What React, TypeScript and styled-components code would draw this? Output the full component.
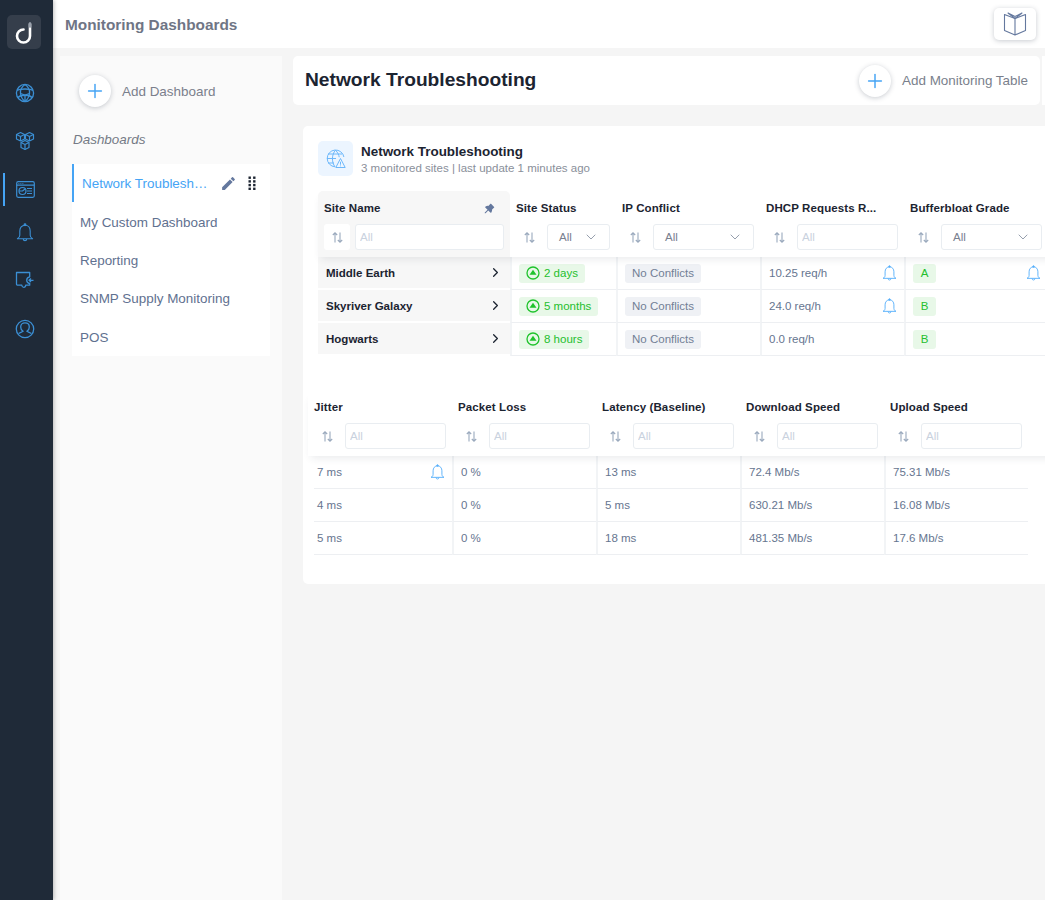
import React from 'react'
import styled, { createGlobalStyle } from 'styled-components'
import { ChevronDown, ChevronRight, Plus } from 'lucide-react'
import { AiFillPushpin } from 'react-icons/ai'
import { MdEdit } from 'react-icons/md'

const GlobalStyle = createGlobalStyle`
  html, body {
    margin: 0;
    height: 100%;
    overflow: hidden;
    background: #f5f5f5;
    font-family: 'Liberation Sans', Arial, sans-serif;
  }
  * { box-sizing: border-box; }
`

const GlobeIcon = () => (
  <svg width="20" height="20" viewBox="0 0 20 20" fill="none" stroke="#3b8fd4" strokeWidth="1.300">
    <circle cx="10" cy="10" r="8.600" />
    <path d="M10 1.500C6.500 4 5 7 5.500 10.500 6 14 8 17 10 18.500" />
    <path d="M10 1.500C13.500 4 15 7 14.500 10.500 14 14 12 17 10 18.500" />
    <path d="M2 7.500C5 5.500 15 5.500 18 7.500" />
    <path d="M3 14.500C6 11.500 14 11.500 17 14.500" />
    <path d="M5.500 10.500 10 12l4.500-1.500M10 12v6.500" />
  </svg>
)

const CubesIcon = () => (
  <svg width="20" height="20" viewBox="0 0 20 20" fill="none" stroke="#3b8fd4" strokeWidth="1.200" strokeLinejoin="round">
    <path d="M5.500 1.500 9.500 3.500v4.500l-4 2-4-2V3.500l4-2ZM14.500 1.500l4 2v4.500l-4 2-4-2V3.500l4-2ZM10 9.500l4 2v5l-4 2-4-2v-5l4-2Z" />
    <path d="M1.500 3.500l4 2 4-2M10.500 3.500l4 2 4-2M6 11.500l4 2 4-2M10 13.500v5M5.500 5.500v4.500M14.500 5.500v4.500" />
  </svg>
)

const DashboardIcon = () => (
  <svg width="19" height="17" viewBox="0 0 19 17" fill="none" stroke="#3b8fd4" strokeWidth="1.200">
    <rect x="0.700" y="0.700" width="17.600" height="15.600" rx="1.500" />
    <path d="M.7 4.200h17.600M11 7.500h5M11 10h5M11 12.500h5" />
    <path d="M2.500 2.500h.8M4.500 2.500h.8M6.500 2.500h.8" />
    <circle cx="6.500" cy="10" r="3.500" />
    <path d="M6.500 10l2.500-2M6.500 10H3" />
  </svg>
)

const BellIcon = ({ color = '#3b8fd4', size = 20 }: { color?: string; size?: number }) => (
  <svg width={size} height={size} viewBox="0 0 20 20" fill="none" stroke={color} strokeWidth="1.100" strokeLinejoin="round">
    <path d="M10 2.200c-3.300 0-5.200 2.600-5.200 5.800v4.300c0 1.500-1 2.700-2.400 3.400h15.200c-1.400-.7-2.400-1.900-2.400-3.400V8c0-3.200-1.900-5.800-5.200-5.800Z" />
    <path d="M8.300 16c0 2.200 3.400 2.200 3.400 0" />
    <circle cx="10" cy="1.800" r=".9" fill={color} />
  </svg>
)

const PuzzleIcon = () => (
  <svg width="20" height="20" viewBox="0 0 20 20" fill="none" stroke="#3b8fd4" strokeWidth="1.300" strokeLinejoin="round">
    <path d="M1.500 1.500h13.200v4.300c-2.200.3-3 1.800-3 3.500 0 1.500 1 2.900 3 3.200v1.700h-4c-.2 2.800-3.600 2.800-3.900 0H2.700a1.200 1.200 0 0 1-1.200-1.200V1.500Z" />
    <path d="M18.500 9.300h-4.300M16 7.500l-2 1.800 2 1.800" />
  </svg>
)

const ProfileIcon = () => (
  <svg width="20" height="20" viewBox="0 0 20 20" fill="none" stroke="#3b8fd4" strokeWidth="1.300">
    <circle cx="10" cy="10" r="8.700" />
    <path d="M3.700 14.500c1.200-1.200 3-1.200 4.300-2.300-1.600-1-2.300-2.600-2.300-4.300 0-2.500 1.800-4 4.300-4s4.300 1.500 4.300 4c0 1.700-.7 3.300-2.300 4.300 1.300 1.100 3.100 1.100 4.300 2.300" />
  </svg>
)

const BookIcon = () => (
  <svg width="24" height="24" viewBox="0 0 24 24" fill="none" stroke="#64789e" strokeWidth="1.100" strokeLinejoin="round">
    <path d="M12 6.500v16.500M12 6.500 1.500 2.500v16l10.500 4.500 10.500-4.500v-16L12 6.500Z" />
    <path d="M12 6.500 5 1l7 3.500M12 6.500 19 1l-7 3.500" />
  </svg>
)

const SiteAlertIcon = () => (
  <svg width="20" height="20" viewBox="0 0 20 20" fill="none" stroke="#6db8fb" strokeWidth="1">
    <path d="M9 17.800A8.400 8.400 0 1 1 17.900 8M1 9.500h9M2 5h14M2 14h6M9.500 1.200C5.500 5.500 5.500 13.500 9 17.800M9.500 1.200c2.500 2.500 3.500 5 3.700 7" />
    <path d="M14.500 9.500 9.800 18.500h9.400l-4.700-9Z" fill="#eef6ff" />
    <path d="M14.500 12.700v3M14.500 16.500v.8" />
  </svg>
)

const StatusUpIcon = () => (
  <svg width="14" height="14" viewBox="0 0 14 14">
    <circle cx="7" cy="7" r="6" fill="none" stroke="#1fc32c" strokeWidth="1.300" />
    <path d="M7 3.800 10.500 8.800h-7L7 3.800Z" fill="#1fc32c" />
  </svg>
)

const SortIcon = () => (
  <svg width="11" height="11" viewBox="0 0 11 11" fill="none" stroke="#9aa9bd" strokeWidth="1.100">
    <path d="M3 10.500V.8M.8 3 3 .8 5.200 3M8 .5v9.700M5.800 8 8 10.200 10.200 8" />
  </svg>
)

const DragDots = () => (
  <svg width="8" height="14" viewBox="0 0 8 14" fill="#1c2431">
    {[0, 1, 2, 3].map(row => (
      <React.Fragment key={row}>
        <rect x="0.500" y={row * 3.700 + 0.500} width="2.400" height="2.400" />
        <rect x="5.100" y={row * 3.700 + 0.500} width="2.400" height="2.400" />
      </React.Fragment>
    ))}
  </svg>
)

const Shell = styled.div`
  display: flex;
  width: 1045px;
  height: 900px;
  overflow: hidden;
`

const Rail = styled.nav`
  flex: none;
  width: 53px;
  background: #1f2a38;
  padding-top: 15px;
  box-shadow: 1px 0 4px rgba(0, 0, 0, 0.25);
  z-index: 3;
`

const Logo = styled.div`
  width: 34px;
  height: 34px;
  margin: 0 0 20px 7px;
  background: #353e4b;
  border-radius: 5px;
`

const RailItem = styled.div<{ $active?: boolean; $nudge?: number }>`
  display: flex;
  align-items: center;
  justify-content: center;
  width: 50px;
  height: 48px;
  margin-top: ${p => p.$nudge ?? 0}px;
  position: relative;

  ${p =>
    p.$active &&
    `&::before {
      content: '';
      position: absolute;
      left: 3px;
      top: 8px;
      width: 2px;
      height: 33px;
      background: #45a4f5;
    }`}
`

const Main = styled.div`
  flex: 1;
  min-width: 0;
  display: flex;
  flex-direction: column;
`

const TopBar = styled.header`
  flex: none;
  height: 48px;
  background: #fff;
  display: flex;
  align-items: center;
  justify-content: space-between;
  padding: 0 9px 0 12px;
`

const TopTitle = styled.h1`
  margin: 1px 0 0;
  font-size: 15.360px;
  font-weight: 700;
  color: #6f7585;
`

const BookButton = styled.button`
  width: 42px;
  height: 32px;
  margin-top: -1px;
  padding: 0;
  border: 0;
  border-radius: 5px;
  background: #fff;
  display: flex;
  align-items: center;
  justify-content: center;
  box-shadow: 0 1px 5px rgba(40, 50, 70, 0.25);
`

const Columns = styled.div`
  flex: 1;
  min-height: 0;
  display: flex;
  padding: 8px 0 0 7px;
`

const LeftPanel = styled.aside`
  flex: none;
  width: 222px;
  background: #fafafa;
  padding: 19px 12px 0 12px;
`

const AddRow = styled.div`
  display: flex;
  align-items: center;
  gap: 11px;
  font-size: 13.440px;
  color: #7a7f8c;
`

const AddCircle = styled.span`
  width: 32px;
  height: 32px;
  border-radius: 50%;
  background: #fff;
  color: #45a4f5;
  display: flex;
  align-items: center;
  justify-content: center;
  box-shadow: 0 1px 5px rgba(40, 50, 70, 0.25);
`

const AddDashboardRow = styled(AddRow)`
  padding-left: 7px;
`

const PanelLabel = styled.div`
  margin: 25px 0 0 1px;
  font-size: 13.440px;
  line-height: 16px;
  font-style: italic;
  color: #757a86;
`

const DashList = styled.ul`
  list-style: none;
  margin: 16px 0 0;
  padding: 0;
  background: #fff;
`

const DashItem = styled.li<{ $active?: boolean }>`
  height: 38.400px;
  display: flex;
  align-items: center;
  font-size: 13.440px;
  color: ${p => (p.$active ? '#45a4f5' : '#5f7190')};
  padding: ${p => (p.$active ? 0 : 1)}px 0 0 8px;
  border-left: ${p => (p.$active ? '2px solid #45a4f5' : '0')};
`

const DashName = styled.span`
  width: 127px;
  white-space: nowrap;
  overflow: hidden;
  text-overflow: ellipsis;
`

const DashActions = styled.span`
  display: flex;
  align-items: center;
  gap: 11px;
  margin-left: 11px;
  color: #64789e;
`

const Content = styled.section`
  flex: 1;
  min-width: 0;
  overflow: hidden;
  padding-left: 11px;
`

const ContentHeader = styled.div`
  width: 747px;
  height: 49px;
  background: #fff;
  border-radius: 5px;
  display: flex;
  align-items: center;
  justify-content: space-between;
  padding: 0 12px;
  position: relative;

  &::after {
    content: '';
    position: absolute;
    left: 749px;
    top: 0;
    width: 10px;
    height: 49px;
    background: #fff;
  }
`

const PageTitle = styled.h2`
  margin: 0 0 2px;
  font-size: 19.200px;
  font-weight: 700;
  color: #1c2431;
`

const Card = styled.div`
  width: 760px;
  height: 458px;
  margin: 21px 0 0 10px;
  padding-top: 15px;
  background: #fff;
  border-radius: 5px;
`

const CardHead = styled.div`
  display: flex;
  align-items: center;
  gap: 8px;
  height: 35px;
  margin-left: 15px;
`

const CardIcon = styled.div`
  width: 35px;
  height: 35px;
  border-radius: 5px;
  background: #ecf5ff;
  display: flex;
  align-items: center;
  justify-content: center;
`

const CardTitle = styled.div`
  margin-top: 2px;
  font-size: 13.440px;
  line-height: 17px;
  font-weight: 700;
  color: #1c2431;
`

const CardSub = styled.div`
  font-size: 11.520px;
  line-height: 16px;
  color: #8a8f9a;
`

const Table = styled.div<{ $left: number; $top: number }>`
  margin: ${p => p.$top}px 0 0 ${p => p.$left}px;
`

const HeadRow = styled.div`
  display: flex;
  position: relative;
  z-index: 1;
  box-shadow: 0 5px 8px -3px rgba(40, 50, 70, 0.1);
`

const HeadCell = styled.div<{ $w: number; $pinned?: boolean; $h: number }>`
  flex: none;
  width: ${p => p.$w}px;
  height: ${p => p.$h}px;
  padding: ${p => (p.$h === 66 ? 10 : 8)}px 6px 0;
  ${p => p.$pinned && 'background: #f7f7f7; border-radius: 5px 5px 0 0;'}
`

const HeadTitle = styled.div`
  display: flex;
  justify-content: space-between;
  align-items: center;
  height: 14px;
  font-size: 11.520px;
  font-weight: 700;
  letter-spacing: 0.1px;
  color: #1c2431;
  white-space: nowrap;
`

const PinIcon = styled.span`
  color: #64789e;
  display: flex;
  margin-right: 8px;
`

const FilterRow = styled.div`
  display: flex;
  align-items: center;
  gap: 5px;
  margin-top: 9px;
`

const SortBox = styled.span<{ $boxed?: boolean }>`
  flex: none;
  width: 26px;
  height: 26px;
  display: flex;
  align-items: center;
  justify-content: center;
  border-radius: 3px;
  ${p => p.$boxed && 'background: #fff;'}
`

const FilterInput = styled.input`
  flex: 1;
  min-width: 0;
  height: 26px;
  padding: 0 4px;
  border: 1px solid #e9edf1;
  border-radius: 3px;
  background: #fff;
  font: 11.520px 'Liberation Sans', Arial, sans-serif;
  outline: none;

  &::placeholder {
    color: #c9d2de;
  }
`

const FilterSelect = styled.div`
  flex: 1;
  min-width: 0;
  height: 26px;
  display: flex;
  align-items: center;
  justify-content: space-between;
  padding: 0 10px 0 11px;
  border: 1px solid #e9edf1;
  border-radius: 3px;
  background: #fff;
  font-size: 11.520px;
  color: #79808f;
`

const BodyRow = styled.div`
  display: flex;
  height: 33px;
`

const NameCell = styled.div<{ $w: number }>`
  flex: none;
  width: ${p => p.$w}px;
  display: flex;
  align-items: center;
  justify-content: space-between;
  padding: 0 7px 0 8px;
  background: #f7f7f7;
  border-bottom: 2px solid #fff;
  font-size: 11.520px;
  font-weight: 700;
  color: #1c2431;
`

const Cell = styled.div<{ $w: number }>`
  flex: none;
  width: ${p => p.$w}px;
  display: flex;
  align-items: center;
  justify-content: space-between;
  padding: 0 6px 0 7px;
  border-left: 2px solid #f2f4f6;
  border-bottom: 1px solid #edeff2;
  font-size: 11.520px;
  color: #66758f;
`

const FirstCell = styled(Cell)`
  margin-left: 6px;
  padding-left: 3px;
  border-left: 0;
`

const Tag = styled.span<{ $tone: 'green' | 'grey' }>`
  display: inline-flex;
  align-items: center;
  gap: 4px;
  height: 19px;
  padding: 0 7px;
  border-radius: 3px;
  font-size: 11.520px;
  background: ${p => (p.$tone === 'green' ? '#e8f8e8' : '#eff1f5')};
  color: ${p => (p.$tone === 'green' ? '#24bf2e' : '#727f95')};
`

const GradeTag = styled(Tag)`
  width: 23px;
  justify-content: center;
  padding: 0;
`

const topHead = [
  { title: 'Site Status', w: 106, select: true },
  { title: 'IP Conflict', w: 144, select: true },
  { title: 'DHCP Requests R...', w: 144 },
  { title: 'Bufferbloat Grade', w: 144, select: true },
]

const topRows = [
  { site: 'Middle Earth', up: '2 days', dhcp: '10.25 req/h', grade: 'A', dhcpBell: true, gradeBell: true },
  { site: 'Skyriver Galaxy', up: '5 months', dhcp: '24.0 req/h', grade: 'B', dhcpBell: true },
  { site: 'Hogwarts', up: '8 hours', dhcp: '0.0 req/h', grade: 'B' },
]

const bottomHead = ['Jitter', 'Packet Loss', 'Latency (Baseline)', 'Download Speed', 'Upload Speed']

const bottomRows = [
  ['7 ms', '0 %', '13 ms', '72.4 Mb/s', '75.31 Mb/s'],
  ['4 ms', '0 %', '5 ms', '630.21 Mb/s', '16.08 Mb/s'],
  ['5 ms', '0 %', '18 ms', '481.35 Mb/s', '17.6 Mb/s'],
]

const dashboards = ['My Custom Dashboard', 'Reporting', 'SNMP Supply Monitoring', 'POS']

const App: React.FunctionComponent = () => (
  <Shell>
    <GlobalStyle />
    <Rail>
      <Logo>
        <svg width="34" height="34" viewBox="0 0 34 34" fill="none" strokeLinecap="round">
          <path d="M23 9v12a6.500 6.500 0 1 1-6.500-6.500" stroke="#fff" strokeWidth="2.600" />
          <path d="M23 8.500v3" stroke="#9aa1ac" strokeWidth="2.600" />
        </svg>
      </Logo>
      <RailItem><GlobeIcon /></RailItem>
      <RailItem><CubesIcon /></RailItem>
      <RailItem $active><DashboardIcon /></RailItem>
      <RailItem $nudge={-4}><BellIcon /></RailItem>
      <RailItem><PuzzleIcon /></RailItem>
      <RailItem><ProfileIcon /></RailItem>
    </Rail>
    <Main>
      <TopBar>
        <TopTitle>Monitoring Dashboards</TopTitle>
        <BookButton><BookIcon /></BookButton>
      </TopBar>
      <Columns>
        <LeftPanel>
          <AddDashboardRow>
            <AddCircle><Plus size={22} strokeWidth={1.600} /></AddCircle>
            Add Dashboard
          </AddDashboardRow>
          <PanelLabel>Dashboards</PanelLabel>
          <DashList>
            <DashItem $active>
              <DashName>Network Troubleshooting</DashName>
              <DashActions>
                <MdEdit size={17} />
                <DragDots />
              </DashActions>
            </DashItem>
            {dashboards.map(name => (
              <DashItem key={name}>{name}</DashItem>
            ))}
          </DashList>
        </LeftPanel>
        <Content>
          <ContentHeader>
            <PageTitle>Network Troubleshooting</PageTitle>
            <AddRow>
              <AddCircle><Plus size={22} strokeWidth={1.600} /></AddCircle>
              Add Monitoring Table
            </AddRow>
          </ContentHeader>
          <Card>
            <CardHead>
              <CardIcon><SiteAlertIcon /></CardIcon>
              <div>
                <CardTitle>Network Troubleshooting</CardTitle>
                <CardSub>3 monitored sites | last update 1 minutes ago</CardSub>
              </div>
            </CardHead>
            <Table $left={15} $top={15}>
              <HeadRow>
                <HeadCell $w={192} $h={66} $pinned>
                  <HeadTitle>
                    Site Name
                    <PinIcon><AiFillPushpin size={13} /></PinIcon>
                  </HeadTitle>
                  <FilterRow>
                    <SortBox $boxed><SortIcon /></SortBox>
                    <FilterInput placeholder="All" />
                  </FilterRow>
                </HeadCell>
                {topHead.map(col => (
                  <HeadCell key={col.title} $w={col.w} $h={66}>
                    <HeadTitle>{col.title}</HeadTitle>
                    <FilterRow>
                      <SortBox><SortIcon /></SortBox>
                      {col.select ? (
                        <FilterSelect>
                          All
                          <ChevronDown size={16} strokeWidth={1.200} color="#7b8798" />
                        </FilterSelect>
                      ) : (
                        <FilterInput placeholder="All" />
                      )}
                    </FilterRow>
                  </HeadCell>
                ))}
              </HeadRow>
              {topRows.map(row => (
                <BodyRow key={row.site}>
                  <NameCell $w={192}>
                    {row.site}
                    <ChevronRight size={15} color="#1c2431" strokeWidth={2} />
                  </NameCell>
                  <Cell $w={106}>
                    <Tag $tone="green"><StatusUpIcon />{row.up}</Tag>
                  </Cell>
                  <Cell $w={144}>
                    <Tag $tone="grey">No Conflicts</Tag>
                  </Cell>
                  <Cell $w={144}>
                    {row.dhcp}
                    {row.dhcpBell && <BellIcon color="#58b0fb" size={17} />}
                  </Cell>
                  <Cell $w={144}>
                    <GradeTag $tone="green">{row.grade}</GradeTag>
                    {row.gradeBell && <BellIcon color="#58b0fb" size={17} />}
                  </Cell>
                </BodyRow>
              ))}
            </Table>
            <Table $left={5} $top={36}>
              <HeadRow>
                {bottomHead.map(title => (
                  <HeadCell key={title} $w={144} $h={64}>
                    <HeadTitle>{title}</HeadTitle>
                    <FilterRow>
                      <SortBox><SortIcon /></SortBox>
                      <FilterInput placeholder="All" />
                    </FilterRow>
                  </HeadCell>
                ))}
              </HeadRow>
              {bottomRows.map((row, i) => (
                <BodyRow key={i}>
                  <FirstCell $w={138}>
                    {row[0]}
                    {i === 0 && <BellIcon color="#58b0fb" size={17} />}
                  </FirstCell>
                  {row.slice(1).map((value, j) => (
                    <Cell key={j} $w={144}>{value}</Cell>
                  ))}
                </BodyRow>
              ))}
            </Table>
          </Card>
        </Content>
      </Columns>
    </Main>
  </Shell>
)

export default App
